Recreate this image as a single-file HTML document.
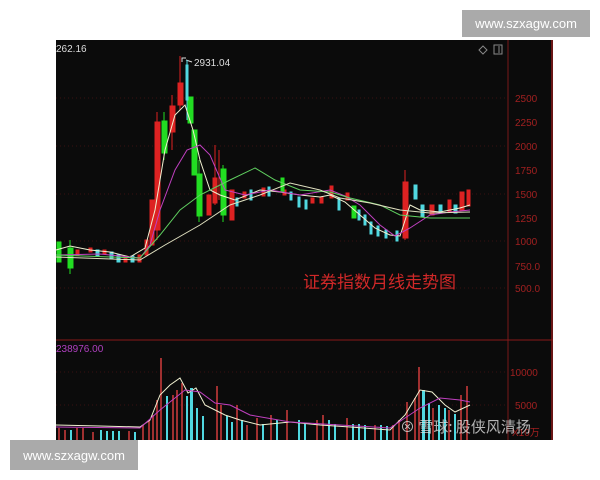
<!DOCTYPE html>
<html><head><meta charset="utf-8"><style>
html,body{margin:0;padding:0;background:#fff;width:600px;height:480px;overflow:hidden;font-family:"Liberation Sans","Noto Sans CJK SC",sans-serif}
.wm{position:absolute;background:#aaa;color:#fff;font-size:13px;display:flex;align-items:center;justify-content:center}
</style></head><body>
<svg width="600" height="480" style="position:absolute;left:0;top:0" xmlns="http://www.w3.org/2000/svg" font-family="Liberation Sans, sans-serif">
<rect x="56" y="40" width="497" height="400" fill="#0b0b0b"/>
<line x1="508" y1="40" x2="508" y2="440" stroke="#7a1a1a" stroke-width="1"/>
<line x1="552" y1="40" x2="552" y2="440" stroke="#8a1a1a" stroke-width="1.5"/>
<line x1="56" y1="340" x2="553" y2="340" stroke="#8a1a1a" stroke-width="1"/>
<g stroke="#3a1010" stroke-dasharray="1,3">
<line x1="56" y1="98" x2="508" y2="98"/><line x1="56" y1="146" x2="508" y2="146"/><line x1="56" y1="194" x2="508" y2="194"/><line x1="56" y1="241" x2="508" y2="241"/><line x1="56" y1="288" x2="508" y2="288"/><line x1="56" y1="372" x2="508" y2="372"/><line x1="56" y1="405" x2="508" y2="405"/>
</g>
<g fill="#a02020" font-size="10">
<text x="515" y="102">2500</text><text x="515" y="126">2250</text><text x="515" y="150">2000</text><text x="515" y="174">1750</text><text x="515" y="198">1500</text><text x="515" y="222">1250</text><text x="515" y="245">1000</text><text x="515" y="270">750.0</text><text x="515" y="292">500.0</text>
<text x="510" y="376">10000</text><text x="515" y="409">5000</text><text x="512" y="436">X10万</text>
</g>
<text x="56" y="52" fill="#ddd" font-size="10">262.16</text>
<text x="194" y="66" fill="#ddd" font-size="10">2931.04</text>
<path d="M182 62 L182 58 L186 58 M186 60 L192 62" stroke="#ddd" fill="none"/>
<text x="56" y="352" fill="#b040c0" font-size="10">238976.00</text>
<path d="M483 46 L487 50 L483 54 L479 50Z" stroke="#888" fill="none"/>
<rect x="494" y="45" width="8" height="9" stroke="#888" fill="none"/><line x1="499" y1="46" x2="499" y2="53" stroke="#888"/>
<text x="303" y="288" fill="#d02828" font-size="17" font-family="Noto Sans CJK SC, sans-serif">证券指数月线走势图</text>
<!-- candles -->
<g stroke-width="1">
<g fill="#22dd22" stroke="#22dd22"><rect x="57" y="242" width="4" height="20"/><rect x="68" y="248" width="5" height="20"/><line x1="70" y1="240" x2="70" y2="274"/></g>
<g fill="#dd2222" stroke="#dd2222"><rect x="76" y="250" width="3" height="5"/><rect x="89" y="248" width="3" height="4"/><rect x="103" y="250" width="3" height="4"/><rect x="124" y="256" width="3" height="6"/><rect x="138" y="255" width="3" height="7"/><rect x="145" y="240" width="3" height="15"/><rect x="150" y="200" width="4" height="45"/>
<rect x="155" y="122" width="5" height="108"/><line x1="157" y1="112" x2="157" y2="240"/>
<rect x="170" y="106" width="5" height="26"/><line x1="172" y1="95" x2="172" y2="150"/>
<rect x="178" y="83" width="5" height="22"/><line x1="180" y1="56" x2="180" y2="110"/>
<rect x="207" y="195" width="4" height="20"/><rect x="213" y="178" width="4" height="25"/><line x1="215" y1="145" x2="215" y2="205"/><line x1="219" y1="150" x2="219" y2="200"/>
<rect x="230" y="190" width="4" height="30"/>
<rect x="243" y="192" width="3" height="6"/><rect x="262" y="188" width="3" height="8"/><rect x="283" y="190" width="3" height="5"/><rect x="311" y="198" width="3" height="5"/><rect x="320" y="197" width="3" height="6"/><rect x="330" y="186" width="3" height="12"/><rect x="346" y="193" width="3" height="7"/>
<rect x="403" y="182" width="5" height="56"/><line x1="405" y1="170" x2="405" y2="240"/>
<rect x="430" y="205" width="4" height="10"/><rect x="448" y="200" width="3" height="12"/><rect x="460" y="192" width="4" height="18"/><rect x="467" y="190" width="3" height="16"/>
</g>
<g fill="#22dd22" stroke="#22dd22">
<rect x="162" y="121" width="5" height="32"/><line x1="164" y1="112" x2="164" y2="160"/>
<rect x="188" y="97" width="5" height="26"/><rect x="192" y="130" width="5" height="45"/><rect x="197" y="174" width="5" height="42"/><line x1="199" y1="160" x2="199" y2="222"/>
<rect x="221" y="169" width="5" height="46"/><line x1="223" y1="165" x2="223" y2="222"/>
<rect x="281" y="178" width="3" height="14"/><rect x="352" y="206" width="4" height="12"/>
</g>
<g fill="#50d8e0" stroke="#50d8e0">
<rect x="186" y="65" width="2" height="35"/><line x1="187" y1="60" x2="187" y2="120"/>
<rect x="96" y="250" width="3" height="6"/><rect x="110" y="252" width="3" height="6"/><rect x="117" y="255" width="3" height="7"/><rect x="131" y="256" width="3" height="6"/>
<rect x="236" y="198" width="2" height="8"/><rect x="250" y="190" width="2" height="10"/><rect x="268" y="187" width="2" height="9"/><rect x="290" y="192" width="2" height="8"/><rect x="298" y="197" width="2" height="10"/><rect x="305" y="200" width="2" height="9"/>
<rect x="338" y="198" width="2" height="12"/><rect x="358" y="210" width="2" height="10"/><rect x="364" y="215" width="2" height="10"/><rect x="370" y="222" width="2" height="12"/><rect x="377" y="226" width="2" height="10"/><rect x="385" y="230" width="2" height="8"/><rect x="396" y="231" width="2" height="10"/>
<rect x="414" y="185" width="3" height="14"/><rect x="421" y="205" width="3" height="12"/><rect x="439" y="205" width="3" height="8"/><rect x="454" y="205" width="3" height="8"/>
</g>
<g fill="none" stroke-width="1">
<polyline stroke="#f0f0d0" points="56,250 70,246 90,250 110,252 130,257 145,248 155,210 165,150 175,115 185,105 193,130 200,160 210,190 220,195 235,200 260,190 280,192 300,195 320,197 330,195 345,202 360,215 375,228 390,235 400,236 410,205 420,210 440,212 460,208 470,205"/>
<polyline stroke="#c040c0" points="56,255 100,254 140,258 150,245 160,210 175,170 187,150 200,145 210,155 225,190 245,195 270,190 300,195 330,190 345,196 360,205 380,225 395,236 410,228 430,215 450,212 470,210"/>
<polyline stroke="#60d060" points="56,255 140,258 160,235 180,210 200,195 230,180 255,168 275,180 300,190 330,192 350,198 380,205 400,215 430,218 470,218"/>
<polyline stroke="#e0e0c0" points="56,257 140,260 165,245 200,225 230,205 260,195 290,183 320,190 340,198 370,203 400,210 430,213 470,212"/>
</g>
</g>
<!-- volume -->
<g fill="#a03030">
<rect x="58" y="428" width="2" height="12"/><rect x="64" y="430" width="2" height="10"/><rect x="76" y="428" width="2" height="12"/><rect x="82" y="428" width="2" height="12"/><rect x="92" y="432" width="2" height="8"/><rect x="128" y="431" width="2" height="9"/><rect x="142" y="425" width="2" height="15"/><rect x="148" y="420" width="2" height="20"/><rect x="152" y="415" width="2" height="25"/><rect x="156" y="400" width="2" height="40"/><rect x="160" y="358" width="2" height="82"/><rect x="172" y="395" width="2" height="45"/><rect x="176" y="390" width="2" height="50"/><rect x="181" y="383" width="2" height="57"/><rect x="216" y="386" width="2" height="54"/><rect x="220" y="405" width="2" height="35"/><rect x="236" y="405" width="2" height="35"/><rect x="246" y="425" width="2" height="15"/><rect x="256" y="418" width="2" height="22"/><rect x="270" y="415" width="2" height="25"/><rect x="286" y="410" width="2" height="30"/><rect x="316" y="420" width="2" height="20"/><rect x="322" y="415" width="2" height="25"/><rect x="346" y="418" width="2" height="22"/><rect x="374" y="425" width="2" height="15"/><rect x="392" y="425" width="2" height="15"/><rect x="398" y="420" width="2" height="20"/><rect x="406" y="402" width="2" height="38"/><rect x="414" y="398" width="2" height="42"/><rect x="418" y="367" width="2" height="73"/><rect x="432" y="408" width="2" height="32"/><rect x="448" y="410" width="2" height="30"/><rect x="460" y="395" width="2" height="45"/><rect x="466" y="386" width="2" height="54"/>
</g>
<g fill="#50d8e0">
<rect x="70" y="430" width="2" height="10"/><rect x="100" y="430" width="2" height="10"/><rect x="106" y="431" width="2" height="9"/><rect x="112" y="431" width="2" height="9"/><rect x="118" y="431" width="2" height="9"/><rect x="134" y="432" width="2" height="8"/><rect x="166" y="396" width="2" height="44"/><rect x="186" y="396" width="2" height="44"/><rect x="190" y="388" width="3" height="52"/><rect x="196" y="408" width="2" height="32"/><rect x="202" y="416" width="2" height="24"/><rect x="226" y="416" width="2" height="24"/><rect x="231" y="422" width="2" height="18"/><rect x="241" y="420" width="2" height="20"/><rect x="262" y="424" width="2" height="16"/><rect x="276" y="420" width="2" height="20"/><rect x="298" y="420" width="2" height="20"/><rect x="304" y="423" width="2" height="17"/><rect x="328" y="420" width="2" height="20"/><rect x="334" y="424" width="2" height="16"/><rect x="352" y="424" width="2" height="16"/><rect x="358" y="424" width="2" height="16"/><rect x="364" y="425" width="2" height="15"/><rect x="380" y="425" width="2" height="15"/><rect x="386" y="426" width="2" height="14"/><rect x="422" y="390" width="3" height="50"/><rect x="428" y="403" width="2" height="37"/><rect x="438" y="405" width="2" height="35"/><rect x="444" y="408" width="2" height="32"/><rect x="454" y="414" width="2" height="26"/>
</g>
<polyline fill="none" stroke="#f0f0d0" points="56,425 100,426 140,427 150,420 160,395 170,385 180,378 188,393 196,388 205,405 215,410 225,415 240,420 260,425 290,422 320,425 350,427 390,430 405,415 420,390 432,392 445,405 455,412 470,405"/>
<polyline fill="none" stroke="#c040c0" points="56,427 140,428 160,410 185,390 200,392 215,403 230,405 250,415 290,422 340,425 390,428 420,408 440,398 460,400 470,402"/>
<text x="400" y="432" fill="#ddd" fill-opacity="0.8" font-size="15" font-family="Noto Sans CJK SC, sans-serif">⊗ 雪球: 股侠风清扬</text>
</svg>
<div class="wm" style="left:462px;top:10px;width:128px;height:27px">www.szxagw.com</div>
<div class="wm" style="left:10px;top:440px;width:128px;height:30px">www.szxagw.com</div>
</body></html>
